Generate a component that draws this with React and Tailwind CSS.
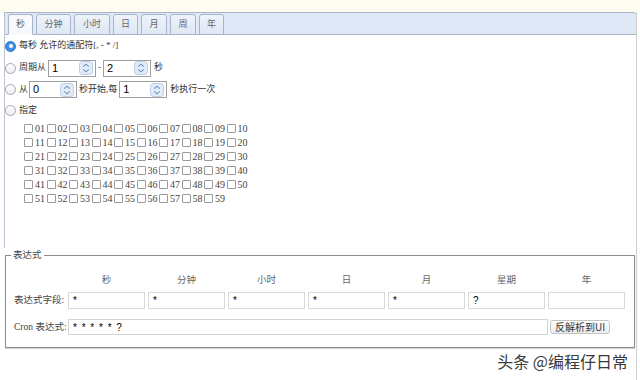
import React from "react"

const tabs = [
  { label: "秒", w: "w-[25px]", active: true },
  { label: "分钟", w: "w-[35px]" },
  { label: "小时", w: "w-[36px]" },
  { label: "日", w: "w-[25px]" },
  { label: "月", w: "w-[26px]" },
  { label: "周", w: "w-[26px]" },
  { label: "年", w: "w-[25px]" },
]

const seconds = Array.from({ length: 59 }, (_, i) => String(i + 1).padStart(2, "0"))

const columns = ["秒", "分钟", "小时", "日", "月", "星期", "年"]
const fields = ["*", "*", "*", "*", "*", "?", ""]

const Radio = ({ checked }) =>
  checked ? (
    <span className="w-[11px] h-[11px] rounded-full bg-[#3a8ee6] border border-[#2b77cc] flex items-center justify-center shrink-0">
      <span className="w-[4px] h-[4px] rounded-full bg-white" />
    </span>
  ) : (
    <span className="w-[11px] h-[11px] rounded-full border border-[#a6a6a6] bg-linear-to-b from-white to-[#eeeeee] shrink-0" />
  )

const Spin = ({ value }) => (
  <span className="h-[17px] w-[48px] border border-[#9f9f9f] bg-white flex items-center justify-between pl-[3px] pr-[2px] shrink-0">
    <span className="font-['Liberation_Sans',sans-serif] text-[11px] text-black leading-none">{value}</span>
    <svg width="14" height="14" viewBox="0 0 14 14">
      <rect x="0.5" y="0.5" width="13" height="13" rx="3" fill="#e2ecf8" stroke="#bccee6" />
      <path d="M4.2 5.6 L7 3.2 L9.8 5.6" fill="none" stroke="#6f90bd" strokeWidth="1.1" />
      <path d="M4.2 8.4 L7 10.8 L9.8 8.4" fill="none" stroke="#6f90bd" strokeWidth="1.1" />
    </svg>
  </span>
)

const Box = () => (
  <span className="w-[9px] h-[9px] border border-[#9a9a9a] rounded-[1px] bg-white shrink-0" />
)

export default function App() {
  return (
    <div className="w-[640px] h-[380px] bg-white relative overflow-hidden text-[#333] font-['Liberation_Serif','Noto_Sans_CJK_SC',serif] text-[9px]">
      <div className="h-[12px] bg-[#fffdf1]" />
      <div className="ml-[4px] w-[633px] h-[368px] border-r border-[#cfcfcf]">
        {/* tab panel */}
        <div className="h-[236px] border-l border-[#bcc5d4]">
          <div className="h-[23px] bg-[#dfe8f6] border-t border-b border-[#aab4c8] rounded-tr-[3px] flex items-end gap-[3px] pl-[3px]">
            {tabs.map((t) => (
              <div
                key={t.label}
                className={
                  "h-[21px] -mb-px rounded-t-[3px] border border-[#aab4c8] flex items-center justify-center text-[#666] " +
                  t.w +
                  (t.active ? " bg-[#f7f9fd] border-b-[#f7f9fd]" : " bg-linear-to-b from-[#eef3fb] to-[#dfe7f4]")
                }
              >
                {t.label}
              </div>
            ))}
          </div>

          <div className="text-[9px]">
            <div className="h-[22px] flex items-center gap-[3px]">
              <Radio checked />
              <span>每秒 允许的通配符[, - * /]</span>
            </div>
            <div className="h-[22px] flex items-center">
              <Radio />
              <span className="ml-[3px] mr-[2px]">周期从</span>
              <Spin value="1" />
              <span className="mx-[2px]">-</span>
              <Spin value="2" />
              <span className="ml-[3px]">秒</span>
            </div>
            <div className="h-[21px] flex items-center">
              <Radio />
              <span className="ml-[3px] mr-[1px]">从</span>
              <Spin value="0" />
              <span className="mx-[2px]">秒开始,每</span>
              <Spin value="1" />
              <span className="ml-[3px]">秒执行一次</span>
            </div>
            <div className="h-[21px] flex items-center gap-[3px]">
              <Radio />
              <span>指定</span>
            </div>
          </div>

          <div className="grid grid-cols-[repeat(10,22.5px)] pl-[19px]">
            {seconds.map((s) => (
              <div key={s} className="h-[14px] flex items-center">
                <Box />
                <span className="ml-[2px] text-[10px] text-[#444]">{s}</span>
              </div>
            ))}
          </div>
        </div>

        {/* expression */}
        <fieldset className="ml-[1px] w-[630px] border border-[#8c8c8c] pb-[12px] shadow-[0_1px_1px_rgba(0,0,0,0.15)] text-[9.5px]">
          <legend className="ml-[5px] px-[2px] leading-[14px] text-[#444]">表达式</legend>
          <div className="grid grid-cols-[59px_repeat(7,77px)] gap-x-[3px] pt-[9px]">
            <div />
            {columns.map((c) => (
              <div key={c} className="h-[18px] flex items-center justify-center text-[#666]">
                {c}
              </div>
            ))}
            <div className="h-[17px] mt-[3px] pl-[8px] flex items-center text-[#444] whitespace-nowrap">表达式字段:</div>
            {fields.map((f, i) => (
              <div
                key={i}
                className="h-[17px] mt-[3px] border border-[#d9d9d9] bg-white flex items-center pl-[4px] font-['Liberation_Sans',sans-serif] text-[10px] text-black"
              >
                {f}
              </div>
            ))}
          </div>
          <div className="flex items-center mt-[10px]">
            <div className="w-[62px] pl-[8px] text-[#444] whitespace-nowrap">Cron 表达式:</div>
            <div className="w-[480px] h-[16px] border border-[#d4d4d4] bg-white flex items-center pl-[4px] font-['Liberation_Sans',sans-serif] text-[10px] text-black tracking-[1px]">
              * * * * * ?
            </div>
            <button className="ml-[2px] h-[14px] px-[4px] border border-[#c4c4c4] rounded-[3px] bg-linear-to-b from-white to-[#ececec] text-[10px] leading-none text-[#333] font-['Noto_Sans_CJK_SC',sans-serif] whitespace-nowrap">
              反解析到UI
            </button>
          </div>
        </fieldset>
      </div>

      <div className="absolute right-[12px] bottom-[11px] text-[16px] leading-none text-[#3a3a3a] font-['Noto_Sans_CJK_SC',sans-serif] [text-shadow:0_0_2px_#fff,0_0_2px_#fff]">
        头条 @编程仔日常
      </div>
    </div>
  )
}
